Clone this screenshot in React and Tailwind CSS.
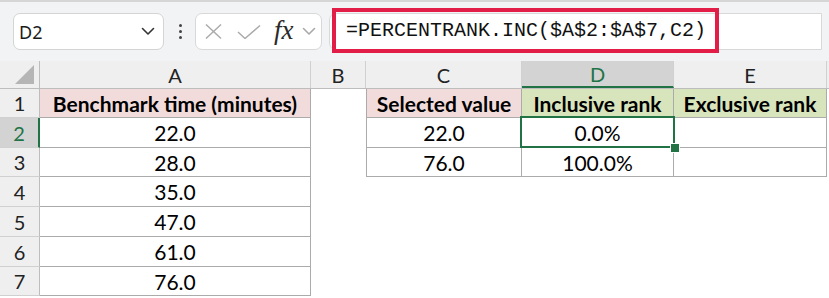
import React from "react";

const cellFont = { fontFamily: "Lato, 'Noto Sans', sans-serif" };

function Chevron({ className }) {
  return (
    <svg width="14" height="9" viewBox="0 0 14 9" className={className}>
      <polyline points="1.5,1.5 7,7 12.5,1.5" fill="none" stroke="currentColor" strokeWidth="1.6" strokeLinecap="round" strokeLinejoin="round" />
    </svg>
  );
}

const cols = [
  { key: "A", w: "w-[271px]" },
  { key: "B", w: "w-[55px]" },
  { key: "C", w: "w-[156px]" },
  { key: "D", w: "w-[152px]" },
  { key: "E", w: "w-[153px]" },
];

const aVals = ["22.0", "28.0", "35.0", "47.0", "61.0", "76.0"];
const rowH = ["h-[29px]", "h-[30px]", "h-[29px]", "h-[30px]", "h-[30px]", "h-[30px]", "h-[29px]"];

export default function App() {
  return (
    <div className="w-[829px] h-[298px] bg-white overflow-hidden" style={cellFont}>
      {/* toolbar */}
      <div className="h-[2px] bg-[#d6d6d6]" />
      <div className="h-[59px] bg-[#f2f3f5] flex items-center">
        <div className="ml-[13px] w-[151px] h-[37px] bg-white border border-[#d4d4d4] rounded-[7px] flex items-center justify-between pl-[5px] pr-[8px]">
          <span className="text-[18px] text-[#1a1a1a] leading-none" style={{ fontFamily: "'Noto Sans', 'Open Sans', sans-serif" }}>D2</span>
          <Chevron className="text-[#333]" />
        </div>
        <div className="ml-[15px] w-[3px] flex flex-col gap-[3px]">
          <div className="w-[3px] h-[3px] rounded-full bg-[#444]" />
          <div className="w-[3px] h-[3px] rounded-full bg-[#444]" />
          <div className="w-[3px] h-[3px] rounded-full bg-[#444]" />
        </div>
        <div className="ml-[13px] w-[127px] h-[37px] bg-white border border-[#d8d8d8] rounded-[7px] flex items-center pl-[8px]">
          <svg width="19" height="15" viewBox="0 0 19 15">
            <line x1="2" y1="0.5" x2="17" y2="14.5" stroke="#a9a9a9" strokeWidth="1.4" />
            <line x1="17" y1="0.5" x2="2" y2="14.5" stroke="#a9a9a9" strokeWidth="1.4" />
          </svg>
          <svg width="24" height="14" viewBox="0 0 24 14" className="ml-[14px]">
            <polyline points="1,7 8,13.5 23,0.5" fill="none" stroke="#a9a9a9" strokeWidth="1.4" />
          </svg>
          <span className="ml-[13px] text-[27px] italic text-[#2a2a2a] leading-none mt-[-2px]" style={{ fontFamily: "'Liberation Serif', 'DejaVu Serif', serif" }}>fx</span>
          <Chevron className="ml-[8px] text-[#a9a9a9]" />
        </div>
        <div className="ml-[7px] w-[493px] h-[37px] bg-white border border-[#d8d8d8] rounded-l-[7px] relative">
          <div className="absolute left-[2px] top-[-6px] w-[387px] h-[45px] border-4 border-[#e11d48] flex items-center pl-[10px]">
            <span className="text-[20px] text-[#111] leading-none whitespace-nowrap" style={{ fontFamily: "'Liberation Mono', 'DejaVu Sans Mono', monospace" }}>
              =PERCENTRANK.INC($A$2:$A$7,C2)
            </span>
          </div>
        </div>
      </div>

      {/* column header */}
      <div className="flex h-[28px] bg-[#efefef] border-b border-[#bdbdbd]">
        <div className="w-[40px] border-r border-[#bdbdbd] relative">
          <svg width="20" height="20" viewBox="0 0 20 20" className="absolute left-[15px] top-[4px]">
            <polygon points="19,0 19,19 0,19" fill="#b5b5b5" />
          </svg>
        </div>
        {cols.map((c) => (
          <div
            key={c.key}
            className={`${c.w} border-r border-[#d0d0d0] flex items-center justify-center text-[20px] leading-none ${c.key === "D" ? "bg-[#d3d3d3] text-[#217346] border-b-2 border-b-[#217346]" : "text-[#222]"}`}
          >
            {c.key}
          </div>
        ))}
      </div>

      {/* rows */}
      <div className="relative">
        {rowH.map((h, i) => {
          const r = i + 1;
          const sel = r === 2;
          return (
            <div key={r} className={`flex ${h}`}>
              <div
                className={`w-[40px] flex items-center justify-center text-[20px] leading-none border-b border-[#d0d0d0] ${sel ? "bg-[#d3d3d3] text-[#217346] border-r-2 border-r-[#217346]" : "bg-[#efefef] text-[#222] border-r border-r-[#bdbdbd]"}`}
              >
                {r}
              </div>
              {/* A */}
              <div
                className={`w-[271px] border-r border-b border-[#ababab] flex items-center justify-center text-[21px] text-black leading-none ${r === 1 ? "bg-[#f2dcdb] font-bold" : "bg-white"}`}
              >
                {r === 1 ? "Benchmark time (minutes)" : aVals[i - 1]}
              </div>
              {/* B */}
              <div className="w-[55px]" />
              {/* C D E */}
              {r <= 3 ? (
                <>
                  <div className={`w-[156px] border-l border-r border-b border-[#ababab] flex items-center justify-center text-[21px] text-black leading-none ${r === 1 ? "bg-[#f2dcdb] font-bold" : ""}`}>
                    {r === 1 ? "Selected value" : r === 2 ? "22.0" : "76.0"}
                  </div>
                  <div className={`w-[152px] border-r border-b border-[#ababab] flex items-center justify-center text-[21px] text-black leading-none ${r === 1 ? "bg-[#d8e4bc] font-bold" : ""}`}>
                    {r === 1 ? "Inclusive rank" : r === 2 ? "0.0%" : "100.0%"}
                  </div>
                  <div className={`w-[153px] border-r border-b border-[#ababab] flex items-center justify-center text-[21px] text-black leading-none ${r === 1 ? "bg-[#d8e4bc] font-bold" : ""}`}>
                    {r === 1 ? "Exclusive rank" : ""}
                  </div>
                </>
              ) : null}
            </div>
          );
        })}
        {/* selection overlay for D2 */}
        <div className="absolute left-[520px] top-[27px] w-[155px] h-[32px] border-2 border-[#217346] pointer-events-none" />
        <div className="absolute left-[670px] top-[54px] w-[10px] h-[10px] bg-[#217346] border border-white pointer-events-none" />
      </div>
    </div>
  );
}
